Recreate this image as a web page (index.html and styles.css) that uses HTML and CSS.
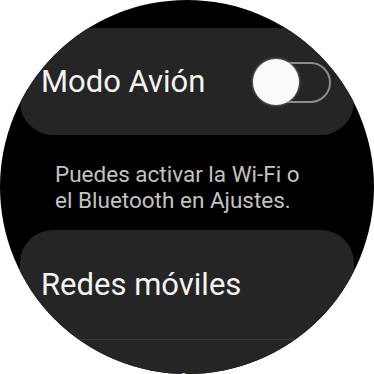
FILE: index.html
```html
<!DOCTYPE html>
<html lang="es">
<head>
<meta charset="utf-8">
<link rel="stylesheet" href="styles.css">
</head>
<body>
<div class="screen">
  <div class="list">
    <div class="card toggle-card">
      <span class="title">Modo Avión</span>
      <span class="switch"><span class="thumb"></span></span>
    </div>
    <p class="desc">Puedes activar la Wi-Fi o<br>el Bluetooth en Ajustes.</p>
    <div class="group">
      <div class="row"><span class="title">Redes móviles</span></div>
      <div class="divider"></div>
      <div class="row next"><span class="title">Ubicación</span></div>
    </div>
  </div>
</div>
</body>
</html>
```
FILE: styles.css
```css
html, body {
  margin: 0;
  padding: 0;
  background: #ffffff;
}
.screen {
  width: 374px;
  height: 374px;
  border-radius: 50%;
  overflow: hidden;
  background: #000000;
  font-family: Roboto, "Noto Sans", sans-serif;
}
.list {
  display: flex;
  flex-direction: column;
  padding-top: 28px;
}
.card {
  margin: 0 20px;
  height: 107px;
  border-radius: 33px;
  background: #252525;
  display: flex;
  align-items: center;
  justify-content: space-between;
  padding: 0 23px 0 21px;
  box-sizing: border-box;
}
.title {
  color: #f4f4f4;
  font-size: 31px;
  line-height: 36px;
  white-space: nowrap;
}
.switch {
  position: relative;
  width: 78px;
  height: 41px;
  box-sizing: border-box;
  border: 2px solid #8c8c8c;
  border-radius: 21px;
  display: flex;
  align-items: center;
  margin-top: 1px;
}
.thumb {
  width: 46px;
  height: 46px;
  border-radius: 50%;
  background: #fafafa;
  margin-left: -2px;
  box-shadow: 0 0 2px 1px rgba(120,120,120,0.7);
}
.desc {
  margin: 0;
  padding: 27px 0 0 55px;
  height: 68px;
  color: #c2c2c2;
  font-size: 22.5px;
  line-height: 25.5px;
  white-space: nowrap;
}
.group {
  margin: 0 20px;
  border-radius: 33px 33px 0 0;
  background: #252525;
  height: 200px;
}
.row {
  height: 109px;
  display: flex;
  align-items: center;
  padding-left: 21px;
}
.divider {
  height: 1px;
  background: #3c3c3c;
}
.row.next {
  align-items: flex-start;
  padding-top: 28px;
  padding-left: 140px;
  box-sizing: border-box;
}
```
